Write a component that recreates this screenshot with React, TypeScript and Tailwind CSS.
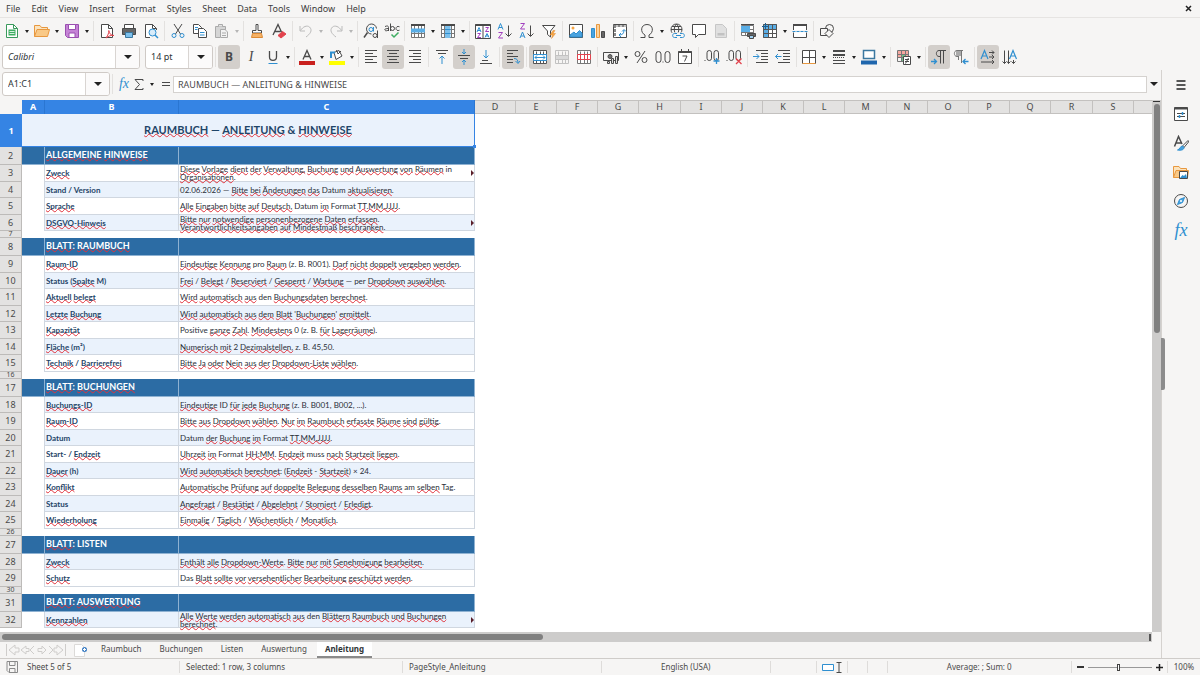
import type { ReactNode } from "react";

const menus = ["File", "Edit", "View", "Insert", "Format", "Styles", "Sheet", "Data", "Tools", "Window", "Help"];

const columns = ["D", "E", "F", "G", "H", "I", "J", "K", "L", "M", "N", "O", "P", "Q", "R", "S"];

const sheets = ["Raumbuch", "Buchungen", "Listen", "Auswertung", "Anleitung"];

type Row = { n: number; kind: "head" | "item" | "gap"; label?: string; text?: string };

const rows: Row[] = [
  { n: 2, kind: "head", label: "ALLGEMEINE HINWEISE" },
  { n: 3, kind: "item", label: "Zweck", text: "Diese Vorlage dient der Verwaltung, Buchung und Auswertung von Räumen in\nOrganisationen." },
  { n: 4, kind: "item", label: "Stand / Version", text: "02.06.2026 — Bitte bei Änderungen das Datum aktualisieren." },
  { n: 5, kind: "item", label: "Sprache", text: "Alle Eingaben bitte auf Deutsch, Datum im Format TT.MM.JJJJ." },
  { n: 6, kind: "item", label: "DSGVO-Hinweis", text: "Bitte nur notwendige personenbezogene Daten erfassen.\nVerantwortlichkeitsangaben auf Mindestmaß beschränken." },
  { n: 7, kind: "gap" },
  { n: 8, kind: "head", label: "BLATT: RAUMBUCH" },
  { n: 9, kind: "item", label: "Raum-ID", text: "Eindeutige Kennung pro Raum (z. B. R001). Darf nicht doppelt vergeben werden." },
  { n: 10, kind: "item", label: "Status (Spalte M)", text: "Frei / Belegt / Reserviert / Gesperrt / Wartung — per Dropdown auswählen." },
  { n: 11, kind: "item", label: "Aktuell belegt", text: "Wird automatisch aus den Buchungsdaten berechnet." },
  { n: 12, kind: "item", label: "Letzte Buchung", text: "Wird automatisch aus dem Blatt 'Buchungen' ermittelt." },
  { n: 13, kind: "item", label: "Kapazität", text: "Positive ganze Zahl. Mindestens 0 (z. B. für Lagerräume)." },
  { n: 14, kind: "item", label: "Fläche (m²)", text: "Numerisch mit 2 Dezimalstellen, z. B. 45,50." },
  { n: 15, kind: "item", label: "Technik / Barrierefrei", text: "Bitte Ja oder Nein aus der Dropdown-Liste wählen." },
  { n: 16, kind: "gap" },
  { n: 17, kind: "head", label: "BLATT: BUCHUNGEN" },
  { n: 18, kind: "item", label: "Buchungs-ID", text: "Eindeutige ID für jede Buchung (z. B. B001, B002, ...)." },
  { n: 19, kind: "item", label: "Raum-ID", text: "Bitte aus Dropdown wählen. Nur im Raumbuch erfasste Räume sind gültig." },
  { n: 20, kind: "item", label: "Datum", text: "Datum der Buchung im Format TT.MM.JJJJ." },
  { n: 21, kind: "item", label: "Start- / Endzeit", text: "Uhrzeit im Format HH:MM. Endzeit muss nach Startzeit liegen." },
  { n: 22, kind: "item", label: "Dauer (h)", text: "Wird automatisch berechnet: (Endzeit - Startzeit) × 24." },
  { n: 23, kind: "item", label: "Konflikt", text: "Automatische Prüfung auf doppelte Belegung desselben Raums am selben Tag." },
  { n: 24, kind: "item", label: "Status", text: "Angefragt / Bestätigt / Abgelehnt / Storniert / Erledigt." },
  { n: 25, kind: "item", label: "Wiederholung", text: "Einmalig / Täglich / Wöchentlich / Monatlich." },
  { n: 26, kind: "gap" },
  { n: 27, kind: "head", label: "BLATT: LISTEN" },
  { n: 28, kind: "item", label: "Zweck", text: "Enthält alle Dropdown-Werte. Bitte nur mit Genehmigung bearbeiten." },
  { n: 29, kind: "item", label: "Schutz", text: "Das Blatt sollte vor versehentlicher Bearbeitung geschützt werden." },
  { n: 30, kind: "gap" },
  { n: 31, kind: "head", label: "BLATT: AUSWERTUNG" },
  { n: 32, kind: "item", label: "Kennzahlen", text: "Alle Werte werden automatisch aus den Blättern Raumbuch und Buchungen\nberechnet." },
];

// words the spell checker accepts
const known = new Set([
  "in", "Datum", "Format", "den", "pro", "per", "am", "muss", "Tag", "Positive", "Status", "Stand",
  "Version", "Start-", "LISTEN", "ID", "Das",
]);

const INK = "#4a4a4a";
const BLUE = "#2f8fd0";

function Spell({ text }: { text: string }) {
  return (
    <>
      {text.split(/(\s+)/).map((token, i) => {
        const m = token.match(/^([('"]*)(.*?)([)':]*\.?)$/);
        const core = m ? m[2] : token;
        const bare = core.replace(/[.,]+$/, "");
        if (bare.length < 2 || known.has(bare) || /\d|²/.test(bare) || !/[A-Za-zÄÖÜäöü]/.test(bare)) {
          return <span key={i}>{token}</span>;
        }
        return (
          <span key={i}>
            {m?.[1]}
            <span className="underline decoration-wavy decoration-[#e0313b] decoration-1 -underline-offset-1 [text-decoration-skip-ink:none]">
              {core}
            </span>
            {m?.[3]}
          </span>
        );
      })}
    </>
  );
}

function Icon({ children, size = "w-4 h-4" }: { children: ReactNode; size?: string }) {
  return (
    <svg viewBox="0 0 16 16" className={`${size} shrink-0`} fill="none" stroke={INK} strokeWidth="1" aria-hidden="true">
      {children}
    </svg>
  );
}

function Caret() {
  return (
    <svg viewBox="0 0 8 4" className="w-2 h-1" aria-hidden="true">
      <path d="M0 0H8L4 4Z" fill="#222" />
    </svg>
  );
}

function SmallCaret({ dim }: { dim?: boolean }) {
  return (
    <svg viewBox="0 0 4 3" className="w-1 h-[3px]" aria-hidden="true">
      <path d="M0 0H4L2 3Z" fill={dim ? "#b5b5b5" : "#222"} />
    </svg>
  );
}

function Tool({ label, on, narrow, children }: { label: string; on?: boolean; narrow?: boolean; children: ReactNode }) {
  return (
    <button
      aria-label={label}
      className={`${narrow ? "w-5" : "w-[22px]"} h-6 shrink-0 flex items-center justify-center rounded-[3px] ${on ? "bg-[#d3cfcb]" : ""}`}
    >
      {children}
    </button>
  );
}

function Drop({ label, dim, children }: { label: string; dim?: boolean; children: ReactNode }) {
  return (
    <div className="flex shrink-0">
      <Tool label={label}>{children}</Tool>
      <button aria-label={`${label} options`} className="w-2 h-6 flex items-center justify-center">
        <SmallCaret dim={dim} />
      </button>
    </div>
  );
}

function Sep({ narrow }: { narrow?: boolean }) {
  return (
    <div className={`${narrow ? "w-1" : "w-[5px]"} h-5 shrink-0 flex justify-center`}>
      <div className="w-px bg-[#e3e1df]" />
    </div>
  );
}

function Combo({ label, value, className, italic }: { label: string; value: string; className: string; italic?: boolean }) {
  return (
    <div className={`${className} h-6 shrink-0 flex bg-white border border-[#cfcac6] rounded-[3px] overflow-hidden`}>
      <input
        aria-label={label}
        defaultValue={value}
        className={`flex-1 min-w-0 px-[5px] text-[9px] text-[#2e3436] outline-none ${italic ? "italic" : ""}`}
      />
      <button aria-label={`${label} list`} className="w-6 flex items-center justify-center border-l border-[#d9d5d2] bg-[#fbfafa]">
        <Caret />
      </button>
    </div>
  );
}

function Lines({ d, arrow }: { d: string; arrow?: string }) {
  return (
    <Icon>
      <path d={d} />
      {arrow && <path d={arrow} stroke={BLUE} />}
    </Icon>
  );
}

const GRID = "M1.5 1.5H14.5V14.5H1.5ZM1.5 6.5H14.5M1.5 10.5H14.5M4.5 2.5V14.5M8.5 2.5V14.5M11.5 2.5V14.5";

function StandardBar() {
  return (
    <div className="h-[27px] pl-px flex items-center border-t border-[#e6e4e2]">
      <Drop label="New">
        <Icon>
          <path d="M2.5 1.5H9.5L13.5 5.5V14.5H2.5Z" stroke="#3a9a5c" fill="#fff" />
          <path d="M9.5 1.5V5.5H13.5" stroke="#3a9a5c" />
          <path d="M4.5 6.5H11.5V12.5H4.5Z" fill="#3fae62" stroke="none" />
          <path d="M5.5 8.5H10.5M5.5 10.5H10.5" stroke="#d5f0de" />
        </Icon>
      </Drop>
      <Drop label="Open">
        <Icon>
          <path d="M.5 13.5V2.5H6L7.5 4.5H13.5V7" stroke="#e8983f" fill="#fbe3bd" />
          <path d="M.5 13.5L3 6.5H15.5L13.5 13.5Z" stroke="#e8983f" fill="#f9c987" />
        </Icon>
      </Drop>
      <Drop label="Save">
        <Icon>
          <path d="M1.5 1.5H14.5V14.5H3.5L1.5 12.5Z" stroke="#9a4fb0" fill="#c583d6" />
          <path d="M4.5 1.5H11.5V6.5H4.5ZM5 10H11V14.5H5Z" stroke="#9a4fb0" fill="#fff" />
        </Icon>
      </Drop>
      <Sep />
      <Tool label="Export as PDF">
        <Icon>
          <path d="M2.5 1.5H9.5L13.5 5.5V14.5H2.5Z" fill="#fff" />
          <path d="M9.5 1.5V5.5H13.5" />
          <path d="M7 15C9 12 10 10 9.8 7.5C10.5 11 12 12.5 15 12.5C12 12 9.5 13 7 15" stroke="#e2434d" />
        </Icon>
      </Tool>
      <Tool label="Print">
        <Icon>
          <path d="M3.5 5V1.5H12.5V5" fill="#fff" />
          <path d="M1.5 5.5H14.5V11.5H1.5Z" fill="#666" />
          <path d="M4.5 9.5H11.5V14.5H4.5Z" fill="#7cc0ec" stroke="#3b78a0" />
        </Icon>
      </Tool>
      <Tool label="Print Preview">
        <Icon>
          <path d="M7 14.5H2.5V1.5H9.5L13.5 5.5V7" fill="#fff" />
          <path d="M9.5 1.5V5.5H13.5" />
          <circle cx="9.5" cy="9.5" r="3.5" stroke={BLUE} fill="#d8ecfa" />
          <path d="M12 12L15 15" stroke={BLUE} strokeWidth="1.5" />
        </Icon>
      </Tool>
      <Sep />
      <Tool label="Cut">
        <Icon>
          <path d="M4 1L10.5 11M12 1L5.5 11" />
          <circle cx="4" cy="12.5" r="2" stroke={BLUE} />
          <circle cx="12" cy="12.5" r="2" stroke={BLUE} />
        </Icon>
      </Tool>
      <Tool label="Copy">
        <Icon>
          <path d="M1.5 1.5H6.5L9.5 4.5V10.5H1.5Z" fill="#fff" />
          <path d="M3 4.5H6M3 6.5H5.5" stroke={BLUE} />
          <path d="M6.5 5.5H11.5L14.5 8.5V14.5H6.5Z" fill="#fff" />
          <path d="M8 9.5H12.5M8 12H12.5" stroke={BLUE} />
        </Icon>
      </Tool>
      <Drop label="Paste" dim>
        <Icon>
          <path d="M6 14.5H1.5V3.5H11.5V7" stroke="#aaa" fill="#d5d5d5" />
          <path d="M4.5 3.5V1.5H8.5V3.5" stroke="#aaa" fill="#e5e5e5" />
          <path d="M6.5 6.5H11L13.5 9V14.5H6.5ZM8 10H12M8 12.5H12" stroke="#aaa" fill="#f2f2f2" />
        </Icon>
      </Drop>
      <Sep />
      <Tool label="Clone Formatting">
        <Icon>
          <path d="M7 1.5H9V7.5H12.5V10H3.5V7.5H7Z" fill="#fff" />
          <path d="M3.5 10.5L2.5 14.5H13.5L12.5 10.5Z" fill="#f6b266" stroke="#dc8a35" />
        </Icon>
      </Tool>
      <Tool label="Clear Direct Formatting">
        <Icon>
          <path d="M2 12L7 1.5L10.5 9M4 8.5H9.5" strokeWidth="1.3" />
          <path d="M7 12.5L11.5 8.5L15 11L10 15Z" fill="#e2434d" stroke="#e2434d" />
        </Icon>
      </Tool>
      <Sep />
      <Drop label="Undo" dim>
        <Icon>
          <path d="M2 3V8H7M2.5 7.5C5 3.5 9 2 11.5 4C15 7.5 12 11 8 14" stroke="#bbb" />
        </Icon>
      </Drop>
      <Drop label="Redo" dim>
        <Icon>
          <path d="M14 3V8H9M13.5 7.5C11 3.5 7 2 4.5 4C1 7.5 4 11 8 14" stroke="#bbb" />
        </Icon>
      </Drop>
      <Sep />
      <Tool label="Find and Replace">
        <Icon>
          <path d="M8.5 11A5 5 0 1 1 13.5 5.5" />
          <path d="M4.5 9.5L1 14.5" strokeWidth="1.5" />
          <circle cx="8" cy="6.5" r="2" stroke={BLUE} />
          <path d="M10.5 4V8.5" stroke={BLUE} />
          <circle cx="12" cy="12.5" r="2" />
          <path d="M14.5 7.5V15" />
        </Icon>
      </Tool>
      <Tool label="Spelling" narrow>
        <Icon>
          <path d="M1 3.5C3.5 2.5 4.5 3 4.5 4.5V8M4.5 5.5C2 5.5 .5 6 .8 7C1.2 8.2 4 8 4.5 6.5" />
          <path d="M6.5 .5V8" />
          <circle cx="8.5" cy="5.5" r="2" />
          <path d="M15.5 3.8C13.5 2.8 12 4 12 5.5S13.5 8.2 15.5 7.2" />
          <path d="M7.5 11.5L10 14L14.5 9.5" stroke="#3fae62" strokeWidth="1.5" />
        </Icon>
      </Tool>
      <Sep />
      <Drop label="Row">
        <Icon>
          <path d={GRID} stroke="#777" fill="#fff" />
          <path d="M1 5.5H15V9.5H1Z" fill="#5aaee6" stroke="none" />
          <path d="M1 2H15" strokeWidth="2" />
        </Icon>
      </Drop>
      <Drop label="Column">
        <Icon>
          <path d={GRID} stroke="#777" fill="#fff" />
          <path d="M5 3H10.5V15H5Z" fill="#7cc0ec" stroke="none" />
          <path d="M5 6.5H10.5M5 10.5H10.5" stroke={BLUE} />
          <path d="M1 2H15" strokeWidth="2" />
        </Icon>
      </Drop>
      <Sep />
      <Tool label="Sort">
        <Icon>
          <path d="M.5 1.5H15.5V15.5H.5ZM8 1.5V15" fill="#fff" />
          <path d="M.5 2H15.5" strokeWidth="2" />
          <path d="M2 9L4 4.5L6 9M2.5 7.5H5.5M10 14.5L12 10.5L14 14.5M10.5 13H13.5" stroke={BLUE} />
          <path d="M2.5 10.5H5.5L2.5 14.5H6M10.5 4.5H13.5L10.5 8.5H14" stroke="#a23fbf" />
        </Icon>
      </Tool>
      <Tool label="Sort Ascending">
        <Icon>
          <path d="M1 6.5L3.5 .5L6 6.5M2 4.5H5" stroke={BLUE} />
          <path d="M1.5 9.5H5.5L1.5 15H6" stroke="#a23fbf" />
          <path d="M11.5 2.5V13M8.5 10.5L11.5 13.5L14.5 10.5" />
        </Icon>
      </Tool>
      <Tool label="Sort Descending">
        <Icon>
          <path d="M1.5 .5H5.5L1.5 6H6" stroke="#a23fbf" />
          <path d="M1 15L3.5 9L6 15M2 13H5" stroke={BLUE} />
          <path d="M11.5 2.5V13M8.5 10.5L11.5 13.5L14.5 10.5" />
        </Icon>
      </Tool>
      <Tool label="AutoFilter">
        <Icon>
          <path d="M1.5 2.5H14L9.5 8V14L6.5 11.5V8Z" fill="#fff" />
          <path d="M12 7.5L9 12H11.5L10.5 15.5L14.5 10.5H12L14 7.5Z" fill="#f6a544" stroke="#dc8a35" strokeWidth=".5" />
        </Icon>
      </Tool>
      <Sep />
      <Tool label="Insert Image">
        <Icon>
          <path d="M1.5 1.5H14.5V14.5H1.5Z" fill="#fff" />
          <path d="M2 14V12L6 9L8 11L11.5 7.5L14 10V14Z" fill="#4aa3df" stroke={BLUE} />
          <circle cx="5" cy="5" r="1.5" fill="#f6a544" stroke="none" />
        </Icon>
      </Tool>
      <Tool label="Insert Chart">
        <Icon>
          <path d="M1.5 5.5H4.5V14.5H1.5Z" fill="#4aa3df" stroke={BLUE} />
          <path d="M6.5 1.5H9.5V14.5H6.5Z" fill="#fbd29c" stroke="#e8983f" />
          <path d="M11.5 8.5H14.5V14.5H11.5Z" fill="#666" />
        </Icon>
      </Tool>
      <Tool label="Insert Pivot Table">
        <Icon>
          <path d="M1.5 1.5H14.5V14.5H1.5Z" fill="#fff" />
          <path d="M1.5 3H14.5M3 2V14.5" strokeWidth="2" stroke="#888" strokeDasharray="3 1" />
          <path d="M7 12C10.5 12 12 10.5 12 7M10 8.5L12 6.5L14 8.5M9 10L7 12L9 14" stroke={BLUE} />
        </Icon>
      </Tool>
      <Sep />
      <Drop label="Insert Special Characters">
        <Icon>
          <path d="M1.5 14.5H6V12C1 9.5 1.5 1.5 8 1.5S15 9.5 10 12V14.5H14.5" />
        </Icon>
      </Drop>
      <Tool label="Insert Hyperlink">
        <Icon>
          <circle cx="7.5" cy="6.5" r="5.5" />
          <path d="M2 6.5H13M7.5 1C4.5 4 4.5 9 7.5 12M7.5 1C10.5 4 10.5 9 7.5 12M3 3.5H12" />
          <path d="M3 9.5H16V16H3Z" fill="#f6f5f4" stroke="none" />
          <path d="M8 10.5H5.5C3 10.5 3 14.5 5.5 14.5H8M11 10.5H13.5C16 10.5 16 14.5 13.5 14.5H11M7 12.5H12" stroke={BLUE} />
        </Icon>
      </Tool>
      <Tool label="Insert Comment">
        <Icon>
          <path d="M1.5 1.5H14.5V11.5H7.5L4.5 14.5V11.5H1.5Z" fill="#fff" />
        </Icon>
      </Tool>
      <Tool label="Headers and Footers">
        <Icon>
          <path d="M2.5 1.5H9.5L13.5 5.5V14.5H2.5Z" fill="#e0e0e0" stroke="#c6c6c6" />
          <path d="M4.5 10H11.5V12.5H4.5Z" fill="#c2c2c2" stroke="none" />
        </Icon>
      </Tool>
      <Sep />
      <Tool label="Define Print Area">
        <Icon>
          <path d="M1.5 2.5H13.5V12.5H1.5ZM1.5 6.5H13.5M1.5 9.5H13.5M5.5 2V12.5M9.5 2V12.5" stroke="#777" fill="#fff" />
          <path d="M1 3H10V9H1Z" fill="#5aaee6" stroke="none" />
          <path d="M1 1.5H14" />
          <path d="M7.5 10.5H15.5V13.5H7.5Z" fill="#666" />
          <path d="M9.5 12.5H13.5V15.5H9.5Z" fill="#9fd0f0" />
        </Icon>
      </Tool>
      <Drop label="Freeze Rows and Columns">
        <Icon>
          <path d="M1.5 1.5H14.5V14.5H1.5Z" fill="#fff" />
          <path d="M1 1H15V6H6V15H1Z" fill="#5aaee6" stroke="none" />
          <path d="M1.5 1.5H14.5V14.5H1.5ZM1.5 6.5H14.5M1.5 10.5H14.5M6.5 1.5V14.5M10.5 1.5V14.5" stroke="#555" />
          <path d="M0 3.5H6M3.5 0V6" stroke="#1c5f92" />
        </Icon>
      </Drop>
      <Tool label="Split Window">
        <Icon>
          <path d="M1.5 7V1.5H14.5V7M1.5 9.5V14.5H14.5V9.5" fill="#fff" />
          <path d="M1 2H15" strokeWidth="2" />
          <path d="M.5 8.5H15.5" stroke={BLUE} strokeDasharray="3 1" />
        </Icon>
      </Tool>
      <Sep />
      <Tool label="Show Draw Functions">
        <Icon>
          <circle cx="10.5" cy="5.5" r="4" />
          <path d="M1.5 5.5H8.5V12.5H1.5Z" fill="#f6f5f4" />
          <path d="M10 6.5L14 10.5L10 14.5L6 10.5Z" fill="#f6f5f4" />
        </Icon>
      </Tool>
    </div>
  );
}

function FormattingBar() {
  return (
    <div className="h-[26px] pl-[2px] flex items-center">
      <Combo label="Font Name" value="Calibri" className="w-[138px]" italic />
      <div className="w-[5px] shrink-0" />
      <Combo label="Font Size" value="14 pt" className="w-[68px]" />
      <Sep />
      <Tool label="Bold" on>
        <span className="text-[12px] leading-none font-bold text-[#4a4a4a]">B</span>
      </Tool>
      <Tool label="Italic">
        <span className="text-[14px] leading-none italic text-[#4a4a4a] font-['Liberation_Serif',serif]">I</span>
      </Tool>
      <Drop label="Underline">
        <Icon>
          <path d="M4.5 2V8C4.5 12.5 11.5 12.5 11.5 8V2" strokeWidth="1.3" />
          <path d="M3.5 14.5H12.5" stroke={BLUE} />
        </Icon>
      </Drop>
      <Sep narrow />
      <Drop label="Font Color">
        <Icon>
          <path d="M4 10.5L8 1.5L12 10.5M5.5 7.5H10.5" strokeWidth="1.3" />
          <path d="M0 12H16V16H0Z" fill="#c9211e" stroke="none" />
        </Icon>
      </Drop>
      <Drop label="Highlighting">
        <Icon>
          <path d="M5 3.5L10 1.5L13 7L7 10.5Z" fill="#fff" />
          <path d="M2 9V3.5H6" stroke={BLUE} strokeWidth="2" />
          <path d="M9 5L7.5 1M9 5L12 2" />
          <path d="M0 12H16V16H0Z" fill="#ffff00" stroke="none" />
        </Icon>
      </Drop>
      <Sep narrow />
      <Tool label="Align Left">
        <Lines d="M2 1.5H14M2 4.5H10M2 7.5H14M2 10.5H10M2 13.5H14" />
      </Tool>
      <Tool label="Center Horizontally" on>
        <Lines d="M2 1.5H14M4 4.5H12M2 7.5H14M4 10.5H12M2 13.5H14" />
      </Tool>
      <Tool label="Align Right">
        <Lines d="M2 1.5H14M6 4.5H14M2 7.5H14M6 10.5H14M2 13.5H14" />
      </Tool>
      <Sep />
      <Tool label="Align Top">
        <Lines d="M2 1.5H14M4 4.5H12" arrow="M8 15V7M5.5 9.5L8 7L10.5 9.5" />
      </Tool>
      <Tool label="Center Vertically" on>
        <Lines d="M2 6.5H14M4 9.5H12" arrow="M8 0V4.5M6 3L8 5L10 3M8 16V11.5M6 13L8 11L10 13" />
      </Tool>
      <Tool label="Align Bottom">
        <Lines d="M4 11.5H10M2 14.5H14" arrow="M8 1V9M5.5 6.5L8 9L10.5 6.5" />
      </Tool>
      <Sep />
      <Tool label="Wrap Text" on>
        <Lines d="M2 1.5H13M2 4.5H8M2 7.5H13M2 10.5H8M2 13.5H8" arrow="M9 9.5C12 9.5 13 11 13 14M10.5 12L13 14.5L15 12" />
      </Tool>
      <Sep />
      <Tool label="Merge and Center Cells" on>
        <Icon>
          <path d={GRID} fill="#fff" stroke="#555" />
          <path d="M1.5 5.5H14.5V11.5H1.5Z" fill="#fff" stroke={BLUE} />
          <path d="M3 8.5H13M5 6.5L3 8.5L5 10.5M11 6.5L13 8.5L11 10.5" stroke={BLUE} />
        </Icon>
      </Tool>
      <Tool label="Merge Cells">
        <Icon>
          <path d={GRID} stroke="#c2c2c2" />
          <path d="M1.5 6.5H14.5V10.5H1.5Z" fill="#d8d8d8" stroke="#c2c2c2" />
        </Icon>
      </Tool>
      <Tool label="Unmerge Cells">
        <Icon>
          <path d={GRID} fill="#fff" stroke="#777" />
          <path d="M1.5 5.5H14.5V10.5H1.5ZM4.5 5.5V10.5M8.5 5.5V10.5M11.5 5.5V10.5" stroke="#e2434d" fill="#fff" />
        </Icon>
      </Tool>
      <Sep />
      <Drop label="Format as Currency">
        <Icon>
          <path d="M.5 3.5H15.5V11.5H.5Z" />
          <circle cx="7" cy="7.5" r="2" fill="#777" />
          <path d="M8.5 14.5V9.5H10.5V14.5ZM12.5 14.5V7.5H14.5V14.5ZM4.5 14.5V12.5H6.5V14.5Z" fill="#ddd" />
        </Icon>
      </Drop>
      <Tool label="Format as Percent">
        <Icon>
          <circle cx="4.5" cy="5" r="2.5" />
          <circle cx="11.5" cy="11" r="2.5" />
          <path d="M12 2L4 14" />
        </Icon>
      </Tool>
      <Tool label="Format as Number">
        <Icon>
          <rect x="1" y="2.5" width="5" height="11" rx="2.5" />
          <rect x="10" y="2.5" width="5" height="11" rx="2.5" />
          <path d="M7.5 13H8.5" />
        </Icon>
      </Tool>
      <Tool label="Format as Date">
        <Icon>
          <path d="M1.5 2.5H14.5V14.5H1.5Z" fill="#fff" />
          <path d="M1.5 3H14.5" strokeWidth="2" />
          <path d="M4.5 0V3M11.5 0V3M5.5 7H10L7.5 12.5" />
        </Icon>
      </Tool>
      <Sep />
      <Tool label="Add Decimal Place">
        <Icon>
          <rect x="3" y="1.5" width="4.5" height="10" rx="2.25" />
          <rect x="10" y="1.5" width="4.5" height="10" rx="2.25" />
          <path d="M.5 11.5H1.5" />
          <path d="M12.5 9V15M9.5 12H15.5" stroke={BLUE} strokeWidth="1.3" />
        </Icon>
      </Tool>
      <Tool label="Delete Decimal Place">
        <Icon>
          <rect x="3" y="1.5" width="4.5" height="10" rx="2.25" />
          <rect x="10" y="1.5" width="4.5" height="10" rx="2.25" />
          <path d="M.5 11.5H1.5" />
          <path d="M10 9.5L15.5 15M15.5 9.5L10 15" stroke="#e2434d" strokeWidth="1.3" />
        </Icon>
      </Tool>
      <Sep />
      <Tool label="Increase Indent">
        <Lines d="M3 1.5H15M8 4.5H15M8 7.5H15M8 10.5H15M3 13.5H15" arrow="M0 7.5H6M3.5 5L6 7.5L3.5 10" />
      </Tool>
      <Tool label="Decrease Indent">
        <Lines d="M3 1.5H15M8 4.5H15M8 7.5H15M8 10.5H15M3 13.5H15" arrow="M6.5 7.5H.5M3 5L.5 7.5L3 10" />
      </Tool>
      <Sep narrow />
      <Drop label="Borders">
        <Icon>
          <path d="M1.5 1.5H14.5V14.5H1.5ZM1.5 8.5H14.5M8.5 1.5V14.5" fill="#fff" />
          <path d="M1.5 14.5H14.5" stroke="#e8983f" />
        </Icon>
      </Drop>
      <Drop label="Border Style">
        <Icon>
          <path d="M2 2H14M2 6H14" strokeWidth="2" />
          <path d="M2 8.5H14" strokeDasharray="1 1" />
          <path d="M2 11.5H14M2 14.5H14" />
        </Icon>
      </Drop>
      <Drop label="Border Color">
        <Icon>
          <path d="M2.5 1.5H13.5V9.5H2.5Z" fill="#fff" stroke="#3b78a0" strokeWidth="1.5" />
          <path d="M0 11.5H16V15.5H0Z" fill="#1f66ad" stroke="none" />
        </Icon>
      </Drop>
      <Sep />
      <Drop label="Conditional">
        <Icon>
          <path d="M1 2H13V8H1Z" fill="#f6a79f" stroke="none" />
          <path d="M5 5H9V12H5Z" fill="#6cc287" stroke="none" />
          <path d="M1.5 1.5H12.5V12.5H1.5ZM1.5 5.5H12.5M1.5 8.5H12.5M5.5 1.5V12.5M9.5 1.5V12.5" stroke="#777" />
          <path d="M7.5 7.5H14.5V15.5H7.5Z" fill="#fff" />
          <path d="M9 10.5H13M9 12.5H13M12.5 9L9.5 14.5" />
        </Icon>
      </Drop>
      <Sep />
      <Tool label="Left-To-Right" on>
        <Icon>
          <path d="M15 1.5H8C4.5 1.5 4.5 7.5 8 7.5H9.5M9.5 1.5V14.5M12.5 1.5V14.5" />
          <path d="M0 12.5H5M3 10L5.5 12.5L3 15" stroke={BLUE} strokeWidth="1.3" />
        </Icon>
      </Tool>
      <Tool label="Right-To-Left">
        <Icon>
          <path d="M10 1.5H4C.5 1.5 .5 7.5 4 7.5H5.5M5.5 1.5V11M8.5 1.5V14" stroke="#777" />
          <path d="M3 2H8V7H3Z" fill="#aaa" stroke="none" />
          <path d="M15.5 12.5H10M12.5 10L10 12.5L12.5 15" stroke={BLUE} strokeWidth="1.3" />
        </Icon>
      </Tool>
      <Sep />
      <Tool label="Text Direction Left To Right" on>
        <Icon>
          <path d="M1 10L4.5 1.5L8 10M2.5 7H6.5" stroke={BLUE} strokeWidth="1.2" />
          <path d="M9 3.5H14M9 8H14M1 13H14M12 1.5L14 3.5L12 5.5M12 6L14 8L12 10M12 11L14 13L12 15" />
        </Icon>
      </Tool>
      <Tool label="Text Direction Top To Bottom">
        <Icon>
          <path d="M7.5 10L11 1.5L14.5 10M9 7H13" stroke={BLUE} strokeWidth="1.2" />
          <path d="M2.5 1.5V14.5M6.5 1.5V14.5M11.5 11V14.5M.5 12.5L2.5 14.5L4.5 12.5M5 12.5L6.5 14.5L8.5 12.5M9.5 12.5L11.5 14.5L13.5 12.5" />
        </Icon>
      </Tool>
    </div>
  );
}

function FormulaBar() {
  return (
    <div className="h-[30px] shrink-0 pl-[2px] pb-[2px] flex items-center">
      <Combo label="Name Box" value="A1:C1" className="w-[108px]" />
      <Sep />
      <button aria-label="Function Wizard" className="w-[18px] text-[14px] leading-none italic text-[#2f8fd0] font-['Liberation_Serif',serif]">
        fx
      </button>
      <button aria-label="Select Function" className="w-3 flex justify-center">
        <svg viewBox="0 0 10 13" className="w-[10px] h-[13px]" fill="none" stroke={INK} aria-hidden="true">
          <path d="M9 3V1.5H1L5.5 6.5L1 11.5H9V10" />
        </svg>
      </button>
      <button aria-label="Function list" className="w-[14px] flex justify-center">
        <SmallCaret />
      </button>
      <button aria-label="Formula" className="w-[14px] flex flex-col items-center gap-[2px]">
        <span className="w-2 h-px bg-[#4a4a4a]" />
        <span className="w-2 h-px bg-[#4a4a4a]" />
      </button>
      <input
        aria-label="Input line"
        defaultValue="RAUMBUCH — ANLEITUNG & HINWEISE"
        className="flex-1 min-w-0 h-[17px] px-1 bg-white border border-[#d5d2cf] text-[9px] text-[#4a4a4a] outline-none"
      />
      <button aria-label="Expand Formula Bar" className="w-[14px] flex justify-center">
        <Caret />
      </button>
    </div>
  );
}

function RowNumber({ n, height }: { n: number; height: string }) {
  return (
    <th scope="row" className="p-0 font-normal">
      <div className={`${height} flex items-center justify-center bg-[#e3e2e1] border-r border-b border-[#bdbbb9] text-[#4a4a4a] ${height === "h-[7px]" ? "text-[7px] leading-[6px]" : "text-[9px] leading-[10px]"}`}>
        {n}
      </div>
    </th>
  );
}

function SheetRow({ row }: { row: Row }) {
  if (row.kind === "gap") {
    return (
      <tr>
        <RowNumber n={row.n} height="h-[7px]" />
        <td colSpan={20} className="p-0" />
      </tr>
    );
  }
  if (row.kind === "head") {
    const cell = "h-[18px] bg-[#2c6ca4] border-r border-b border-[#8fb2d2]";
    return (
      <tr className="text-white">
        <RowNumber n={row.n} height="h-[18px]" />
        <td className="p-0"><div className={cell} /></td>
        <td className="p-0">
          <div className={`${cell} pl-px font-bold text-[9px] leading-4 whitespace-nowrap`}>
            <Spell text={row.label ?? ""} />
          </div>
        </td>
        <td className="p-0"><div className={cell} /></td>
        <td colSpan={17} className="p-0" />
      </tr>
    );
  }
  const height = row.n % 2 ? "h-[17px]" : "h-4";
  const cell = `${height} pl-px flex items-center border-r border-b border-[#d0d7e0] whitespace-pre ${row.n % 2 ? "bg-white" : "bg-[#eaf2fc]"}`;
  const wraps = row.text?.includes("\n");
  return (
    <tr>
      <RowNumber n={row.n} height={height} />
      <td className="p-0"><div className={`${height} border-r border-[#d0d7e0]`} /></td>
      <td className="p-0">
        <div className={`${cell} font-bold text-[8px] leading-[14px] text-[#1f4568]`}>
          <span><Spell text={row.label ?? ""} /></span>
        </div>
      </td>
      <td className="p-0">
        <div className={`${cell} justify-between text-[8px] text-[#2b2f38] ${wraps ? "leading-[8px]" : "leading-[14px]"}`}>
          <span><Spell text={row.text ?? ""} /></span>
          {wraps && (
            <svg viewBox="0 0 3 6" className="w-[3px] h-[6px] shrink-0" aria-hidden="true">
              <path d="M0 0L3 3L0 6Z" fill="#5a1f2a" />
            </svg>
          )}
        </div>
      </td>
      <td colSpan={17} className="p-0" />
    </tr>
  );
}

function Grid() {
  return (
    <table className="w-full table-fixed border-separate border-spacing-0 bg-white">
      <colgroup>
        <col className="w-[22px]" />
        <col className="w-[23px]" />
        <col className="w-[134px]" />
        <col className="w-[296px]" />
        {columns.map((c, i) => (
          <col key={c} className={i % 5 === 4 ? "w-[42px]" : "w-[41px]"} />
        ))}
        <col />
      </colgroup>
      <thead>
        <tr className="text-[9px] leading-[13px]">
          <td className="p-0"><div className="h-[14px] bg-[#f6f5f4]" /></td>
          {["A", "B", "C"].map((c) => (
            <th key={c} scope="col" className="p-0 font-bold text-white">
              <div className="h-[14px] bg-[#3584e4] border-r border-[#2a76d2]">{c}</div>
            </th>
          ))}
          {columns.map((c) => (
            <th key={c} scope="col" className="p-0 font-normal text-[#4a4a4a]">
              <div className="h-[14px] bg-[#e3e2e1] border-r border-y border-[#c3c1bf] leading-[12px]">{c}</div>
            </th>
          ))}
          <td className="p-0"><div className="h-[14px] bg-[#e3e2e1] border-y border-[#c3c1bf]" /></td>
        </tr>
      </thead>
      <tbody>
        <tr>
          <th scope="row" className="p-0">
            <div className="h-[33px] flex items-center justify-center bg-[#3584e4] text-white text-[9px] font-bold">1</div>
          </th>
          <td colSpan={3} className="p-0">
            <div className="relative h-[33px] flex items-center justify-center bg-[#eaf2fc] border-r border-b border-[#3584e4] font-['Lato',sans-serif] font-bold text-[11px] text-[#1f4568]">
              <span><Spell text="RAUMBUCH — ANLEITUNG & HINWEISE" /></span>
              <span className="absolute -right-[2px] -bottom-[2px] w-[3px] h-[3px] bg-[#3584e4]" />
            </div>
          </td>
          <td colSpan={17} className="p-0" />
        </tr>
      </tbody>
      <tbody className="font-['Lato',sans-serif] [&_th]:font-['Noto_Sans',sans-serif]">
        {rows.map((row) => (
          <SheetRow key={row.n} row={row} />
        ))}
      </tbody>
    </table>
  );
}

function SheetTabs() {
  return (
    <div className="h-4 shrink-0 flex items-stretch text-[8px] text-[#4a4a4a]">
      <button aria-label="Scroll sheets" className="ml-[6px] w-[60px] flex items-center">
        <svg viewBox="0 0 60 12" className="w-[60px] h-3" fill="none" stroke="#cfcdcb" aria-hidden="true">
          <path d="M.5 0V12M9 1L3 6L9 11V8H13V4H9ZM20 2L15 6L20 10V7.5H23V4.5H20ZM28 2L24 6L28 10M36 2L40 6L36 10V7.5H32V4.5H36ZM43 2L47 6L43 10M51 1L57 6L51 11V8H48V4H51ZM59.5 0V12" />
        </svg>
      </button>
      <button aria-label="Add Sheet" className="ml-2 w-[14px] flex items-center">
        <svg viewBox="0 0 14 14" className="w-[14px] h-[14px]" fill="none" aria-hidden="true">
          <path d="M.5 1.5H7.5L10.5 4.5V13.5H.5Z" fill="#fff" stroke="#dcdad8" />
          <circle cx="10.5" cy="6.5" r="2.5" fill="#3f7fc4" />
          <path d="M10.5 5V8M9 6.5H12" stroke="#fff" />
        </svg>
      </button>
      <div className="ml-1 flex" role="tablist">
        {sheets.map((name) => {
          const active = name === "Anleitung";
          return (
            <button
              key={name}
              role="tab"
              aria-selected={active}
              className={`flex items-center border-b-2 ${active ? "px-2 ml-px bg-white font-bold text-[#2e3436] border-[#8a8a8a]" : "px-[9px] border-transparent"}`}
            >
              {name}
            </button>
          );
        })}
      </div>
    </div>
  );
}

function Sidebar() {
  return (
    <aside className="w-[39px] shrink-0 relative border-l border-[#d5d2cf] flex flex-col items-center">
      <span className="absolute -left-px top-[268px] w-1 h-[52px] bg-[#8c8c8c] rounded-r-[2px]" />
      <button aria-label="Sidebar Settings" className="h-[29px] flex items-center">
        <Icon>
          <path d="M3.5 4H12.5M3.5 8H12.5M3.5 12H12.5" stroke="#222" strokeWidth="1.5" />
        </Icon>
      </button>
      <button aria-label="Properties" className="h-[29px] flex items-center">
        <Icon>
          <path d="M1.5 1.5H14.5V14.5H1.5Z" fill="#fff" />
          <path d="M1.5 2.5H14.5" strokeWidth="2" />
          <path d="M4 7.5H12M4 10.5H12" />
          <path d="M9.5 6V9M6.5 9V12" stroke={BLUE} strokeWidth="1.5" />
        </Icon>
      </button>
      <button aria-label="Styles" className="h-[29px] flex items-center">
        <Icon>
          <path d="M1.5 11.5L5.5 1.5L9 9M3 8H8.5" strokeWidth="1.5" />
          <path d="M15 5.5L9.5 11L11 12.5L15.5 7Z" fill="#fff" />
          <path d="M9.5 11C7 11 7.5 14 4.5 15C8 15.5 11 15 11 12.5Z" fill="#4aa3df" stroke={BLUE} />
        </Icon>
      </button>
      <button aria-label="Gallery" className="h-[29px] flex items-center">
        <Icon>
          <path d="M.5 13.5V2.5H6L7.5 4.5H13.5V7" stroke="#e8983f" fill="#fbe3bd" />
          <path d="M.5 13.5L3 6.5H15.5L14.5 13.5Z" stroke="#e8983f" fill="#f9c987" />
          <path d="M6.5 7.5H14.5V14.5H6.5Z" fill="#fff" />
          <path d="M7 14L9.5 11L11 12L13 10L14 14Z" fill="#2f8fd0" stroke="none" />
        </Icon>
      </button>
      <button aria-label="Navigator" className="h-[29px] flex items-center">
        <Icon>
          <circle cx="8" cy="8" r="6.5" />
          <path d="M11.5 4.5L9.5 9.5L4.5 11.5L6.5 6.5Z" fill="#4aa3df" stroke={BLUE} />
          <circle cx="8" cy="8" r="1" fill="#fff" stroke="none" />
        </Icon>
      </button>
      <button aria-label="Functions" className="h-[29px] text-[18px] leading-none italic text-[#2f8fd0] font-['Liberation_Serif',serif]">
        fx
      </button>
    </aside>
  );
}

function StatusBar() {
  const cell = "my-[2px] flex items-center border-r border-[#dedcda]";
  return (
    <footer className="h-[17px] shrink-0 flex border-t border-[#cfccc9] text-[8px] text-[#4a4a4a] whitespace-nowrap">
      <div className={`${cell} w-[180px] pl-[6px] gap-[9px]`}>
        <svg viewBox="0 0 12 12" className="w-3 h-3" fill="none" stroke="#8a8a8a" aria-hidden="true">
          <path d="M1 .5H11.5V11.5H3L1 9.5ZM3.5 .5V4.5H9V.5M3.5 11.5V7.5H9V11.5" />
        </svg>
        Sheet 5 of 5
      </div>
      <div className={`${cell} w-[223px] pl-[6px]`}>Selected: 1 row, 3 columns</div>
      <div className={`${cell} w-[199px] pl-[6px]`}>PageStyle_Anleitung</div>
      <div className={`${cell} flex-[21] justify-center`}>English (USA)</div>
      <div className={`${cell} w-[46px]`} />
      <div className={`${cell} w-[31px] justify-center`}>
        <svg viewBox="0 0 20 12" className="w-5 h-3" fill="none" aria-hidden="true">
          <path d="M.5 3.5H11.5V9.5H.5Z" stroke={BLUE} fill="#fff" />
          <path d="M14.5 1.5H19.5M14.5 11.5H19.5M17 1.5V11.5" stroke={INK} />
        </svg>
      </div>
      <div className={`${cell} w-5`} />
      <div className={`${cell} w-5`} />
      <div className={`${cell} flex-[23] justify-center`}>Average: ; Sum: 0</div>
      <div className={`${cell} w-24 justify-center gap-1`}>
        <button aria-label="Zoom Out" className="w-[7px] h-[2px] bg-[#333]" />
        <input
          type="range"
          aria-label="Zoom"
          defaultValue={49}
          className="w-16 h-3 appearance-none bg-transparent [&::-webkit-slider-runnable-track]:h-px [&::-webkit-slider-runnable-track]:bg-[#999] [&::-webkit-slider-thumb]:appearance-none [&::-webkit-slider-thumb]:w-[3px] [&::-webkit-slider-thumb]:h-[7px] [&::-webkit-slider-thumb]:-mt-[3px] [&::-webkit-slider-thumb]:border [&::-webkit-slider-thumb]:border-[#444] [&::-webkit-slider-thumb]:bg-white"
        />
        <button aria-label="Zoom In">
          <svg viewBox="0 0 7 7" className="w-[7px] h-[7px]" aria-hidden="true">
            <path d="M3.5 0V7M0 3.5H7" stroke="#222" strokeWidth="1.5" />
          </svg>
        </button>
      </div>
      <div className="w-8 flex items-center justify-center">100%</div>
    </footer>
  );
}

export default function App() {
  return (
    <div className="h-screen flex flex-col overflow-hidden bg-[#f6f5f4] font-['Noto_Sans',sans-serif]">
      {/* Menu */}
      <nav className="h-[17px] shrink-0 pl-[6px] pr-2 flex items-center text-[9px] text-[#3d3d3d]">
        {menus.map((m) => (
          <button key={m} className="mr-[11px]">{m}</button>
        ))}
        <button aria-label="Close Document" className="ml-auto">
          <svg viewBox="0 0 7 7" className="w-[7px] h-[7px]" aria-hidden="true">
            <path d="M1 1L6 6M6 1L1 6" stroke="#222" strokeWidth="1.5" />
          </svg>
        </button>
      </nav>

      <StandardBar />
      <FormattingBar />

      <div className="flex-1 min-h-0 flex">
        <main className="flex-1 min-w-0 flex flex-col">
          <FormulaBar />
          <div className="flex-1 min-h-0 flex">
            <div className="flex-1 min-w-0 flex flex-col">
              <div className="flex-1 min-h-0 overflow-hidden bg-white">
                <Grid />
              </div>
              <div className="h-[10px] shrink-0 pl-[2px] flex items-center justify-between bg-[#cdcccb]">
                <div className="w-[47%] h-[6px] rounded-full bg-[#808080]" />
                <div className="w-[2px] h-[7px] bg-[#555] mr-px" />
              </div>
            </div>
            <div className="w-[9px] shrink-0 mb-[10px] flex flex-col items-center gap-[2px] bg-[#cdcccb]">
              <div className="mt-px w-[7px] h-px bg-[#333]" />
              <div className="w-[6px] h-[43%] rounded-full bg-[#808080]" />
            </div>
          </div>
          <SheetTabs />
        </main>
        <Sidebar />
      </div>

      <StatusBar />
    </div>
  );
}
